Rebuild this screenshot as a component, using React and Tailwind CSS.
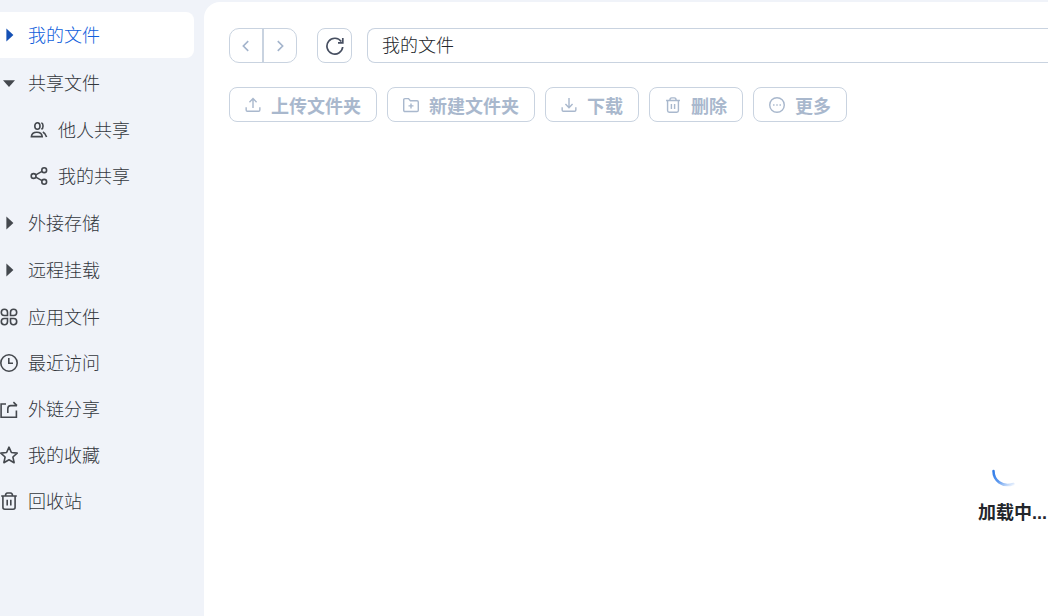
import React, { useState } from "react";

const Icon = ({ size = 18, children }) => (
  <svg
    width={size}
    height={size}
    viewBox="0 0 18 18"
    fill="none"
    stroke="currentColor"
    strokeWidth="1.6"
    className="shrink-0"
    aria-hidden="true"
  >
    {children}
  </svg>
);

const ArrowRight = () => (
  <Icon>
    <path d="M6.4 2.600v12.800l7-6.400z" fill="currentColor" stroke="none" />
  </Icon>
);

const ArrowDown = () => (
  <Icon>
    <path d="M3 6.2h12l-6 6.8z" fill="currentColor" stroke="none" />
  </Icon>
);

const PeopleIcon = () => (
  <Icon>
    <ellipse cx="7.4" cy="5" rx="2.6" ry="3.3" />
    <path d="M11.4 1.700c2.200.9 2.200 5.400 0 6.500" />
    <path d="M1.400 15.600c.2-3 2.400-4.400 5.400-4.400s5.200 1.400 5.400 4.400z" />
    <path d="M12.800 11c1.800.8 3 2.400 3.800 5" />
  </Icon>
);

const ShareIcon = () => (
  <Icon>
    <circle cx="3.600" cy="9" r="2.400" />
    <circle cx="14.200" cy="3.200" r="2.400" />
    <circle cx="14.200" cy="14.800" r="2.400" />
    <path d="M5.800 7.900l6.200-3.500M5.800 10.100l6.200 3.500" />
  </Icon>
);

const AppsIcon = () => (
  <Icon>
    <path d="M7.500 7.500H4.300A3.100 3.100 0 1 1 7.500 4.300z" />
    <path d="M10.500 7.500V4.300a3.100 3.100 0 1 1 3.200 3.200z" />
    <path d="M7.500 10.500v3.200a3.100 3.100 0 1 1-3.200-3.200z" />
    <path d="M10.500 10.500h3.200a3.100 3.100 0 1 1-3.200 3.200z" />
  </Icon>
);

const ClockIcon = () => (
  <Icon>
    <circle cx="9" cy="9" r="8.200" />
    <path d="M8.800 4v5.200h4.200" />
  </Icon>
);

const LinkIcon = () => (
  <Icon>
    <path d="M6 4H1.100v13.200h15.300V10.500" />
    <path d="M7.800 13V8.800c0-2 1-3.200 3-3.200h6.200M13.400 2.200l3.600 3.400" />
  </Icon>
);

const StarIcon = () => (
  <Icon>
    <path
      d="M9 1.200l2.400 5.300 5.800.6-4.300 3.900 1.200 5.700L9 13.800l-5.100 2.900 1.200-5.700L.8 7.100l5.800-.6z"
      strokeLinejoin="round"
    />
  </Icon>
);

const TrashIcon = ({ size }) => (
  <Icon size={size}>
    <path d="M1.200 4h15.600M5.500 3.800c0-1.800.8-2.800 2-2.800h3c1.200 0 2 1 2 2.800" />
    <path d="M2.900 4v11.300c0 1.100.7 1.900 1.800 1.900h8.600c1.100 0 1.800-.8 1.800-1.900V4" />
    <path d="M7.200 7.800v5.600M10.800 7.800v5.600" />
  </Icon>
);

const UploadIcon = () => (
  <Icon size={16}>
    <path d="M9 12.500V1.800M5 5.800l4-4 4 4M1.300 11.500v3.200c0 .9.500 1.400 1.400 1.400h12.600c.9 0 1.400-.5 1.400-1.400v-3.200" />
  </Icon>
);

const DownloadIcon = () => (
  <Icon size={16}>
    <path d="M9 1v11M5 8l4 4 4-4M1.300 11.500v3.200c0 .9.500 1.400 1.400 1.400h12.600c.9 0 1.400-.5 1.400-1.400v-3.200" />
  </Icon>
);

const NewFolderIcon = () => (
  <Icon size={16}>
    <path d="M.8 14.900V3.200c0-.9.500-1.400 1.400-1.400h4L8.300 4.200h7.500c.9 0 1.400.5 1.400 1.400v9.300c0 .9-.5 1.400-1.400 1.400H2.200c-.9 0-1.400-.5-1.400-1.400z" />
    <path d="M9 7.200v5.600M6.200 10h5.600" />
  </Icon>
);

const MoreIcon = () => (
  <Icon size={16}>
    <circle cx="9" cy="9" r="8.200" />
    <path d="M4.600 9h1.600M8.200 9h1.600M11.800 9h1.600" />
  </Icon>
);

const treeItems = [
  { name: "外接存储", icon: <ArrowRight /> },
  { name: "远程挂载", icon: <ArrowRight /> },
];

const sharedItems = [
  { name: "他人共享", icon: <PeopleIcon /> },
  { name: "我的共享", icon: <ShareIcon /> },
];

const leafItems = [
  { name: "应用文件", icon: <AppsIcon /> },
  { name: "最近访问", icon: <ClockIcon /> },
  { name: "外链分享", icon: <LinkIcon /> },
  { name: "我的收藏", icon: <StarIcon /> },
  { name: "回收站", icon: <TrashIcon /> },
];

const actions = [
  { name: "上传文件夹", icon: <UploadIcon /> },
  { name: "新建文件夹", icon: <NewFolderIcon /> },
  { name: "下载", icon: <DownloadIcon /> },
  { name: "删除", icon: <TrashIcon size={16} /> },
  { name: "更多", icon: <MoreIcon /> },
];

const SideItem = ({ name, icon, active, nested, onSelect }) => (
  <button
    type="button"
    onClick={() => onSelect(name)}
    className={`flex h-[46px] w-full items-center gap-[10px] rounded-r-lg text-left ${
      nested ? "pl-[30px]" : ""
    } ${active ? "bg-white text-[#1450b4]" : "text-[#44484e]"}`}
  >
    {icon}
    <span className={`pb-[3px] ${active ? "text-[#1060dc]" : "text-[#33373d]"}`}>{name}</span>
  </button>
);

export default function App() {
  const [selected, setSelected] = useState("我的文件");
  const [path, setPath] = useState("我的文件");

  const renderItem = (item, nested = false) => (
    <SideItem
      key={item.name}
      name={item.name}
      icon={item.icon}
      nested={nested}
      active={selected === item.name}
      onSelect={setSelected}
    />
  );

  return (
    <div className="flex min-h-screen bg-[#f0f3f9] font-['Noto_Sans_CJK_SC',sans-serif] text-lg leading-6 font-light">
      {/* Sidebar */}
      <nav className="w-[204px] shrink-0 pt-3 pr-[10px]">
        {renderItem({ name: "我的文件", icon: <ArrowRight /> })}
        <div className="mt-0.5 flex flex-col gap-px">
          {renderItem({ name: "共享文件", icon: <ArrowDown /> })}
          <div>{sharedItems.map((item) => renderItem(item, true))}</div>
          {treeItems.map((item) => renderItem(item))}
          <div>{leafItems.map((item) => renderItem(item))}</div>
        </div>
      </nav>

      {/* Files */}
      <main className="mt-0.5 flex min-w-0 flex-1 flex-col rounded-tl-2xl bg-white pt-[26px] pl-[25px]">
        <div className="flex">
          <div className="flex h-[35px] w-[68px] shrink-0 divide-x-2 divide-[#c9d3e0] rounded-[10px] border border-[#c9d3e0] text-[#a3b4cc]">
            <button type="button" aria-label="后退" className="flex flex-1 items-center justify-center">
              <Icon size={16}>
                <path d="M11.500 3.500L6 9l5.500 5.500" strokeWidth="1.800" />
              </Icon>
            </button>
            <button type="button" aria-label="前进" className="flex flex-1 items-center justify-center">
              <Icon size={16}>
                <path d="M6.500 3.500L12 9l-5.500 5.500" strokeWidth="1.800" />
              </Icon>
            </button>
          </div>
          <button
            type="button"
            aria-label="刷新"
            className="ml-5 flex size-[35px] shrink-0 items-center justify-center rounded-lg border border-[#c9d3e0] text-[#464e60]"
          >
            <Icon>
              <path d="M16.700 10A7.900 7.900 0 1 1 15.300 4.600M16.800 1v4.800H12" strokeWidth="1.700" />
            </Icon>
          </button>
          <input
            type="text"
            aria-label="路径"
            value={path}
            onChange={(e) => setPath(e.target.value)}
            className="ml-[15px] h-[35px] min-w-0 flex-1 rounded-l-lg border border-r-0 border-[#c9d3e0] px-[14px] pb-[3px] text-[#23262b]"
          />
        </div>

        <div className="mt-6 flex flex-wrap gap-[10px]">
          {actions.map((action) => (
            <button
              key={action.name}
              type="button"
              className="flex h-[35px] items-center gap-[10px] rounded-lg border border-[#c9d3e0] px-[15px] font-bold text-[#a9b8cd]"
            >
              {action.icon}
              <span>{action.name}</span>
            </button>
          ))}
        </div>

        {/* Loading */}
        <div className="flex flex-1 flex-col items-end justify-end pr-px pb-[91px]" role="status">
          <div className="flex flex-col items-center">
            <svg width="40" height="36" viewBox="0 0 40 36" fill="none" aria-hidden="true">
              <defs>
                <linearGradient id="spin" x1="0" y1="0" x2="1" y2="1">
                  <stop offset="0" stopColor="#2f7be8" />
                  <stop offset="0.5" stopColor="#5c98ee" />
                  <stop offset="1" stopColor="#5c98ee" stopOpacity="0.1" />
                </linearGradient>
              </defs>
              <path d="M1.500 6c0 9 8.500 17 20 13" stroke="url(#spin)" strokeWidth="2.500" strokeLinecap="round" />
            </svg>
            <span className="font-['Liberation_Sans','Noto_Sans_CJK_SC',sans-serif] font-bold text-[#23262b]">
              加载中...
            </span>
          </div>
        </div>
      </main>
    </div>
  );
}
